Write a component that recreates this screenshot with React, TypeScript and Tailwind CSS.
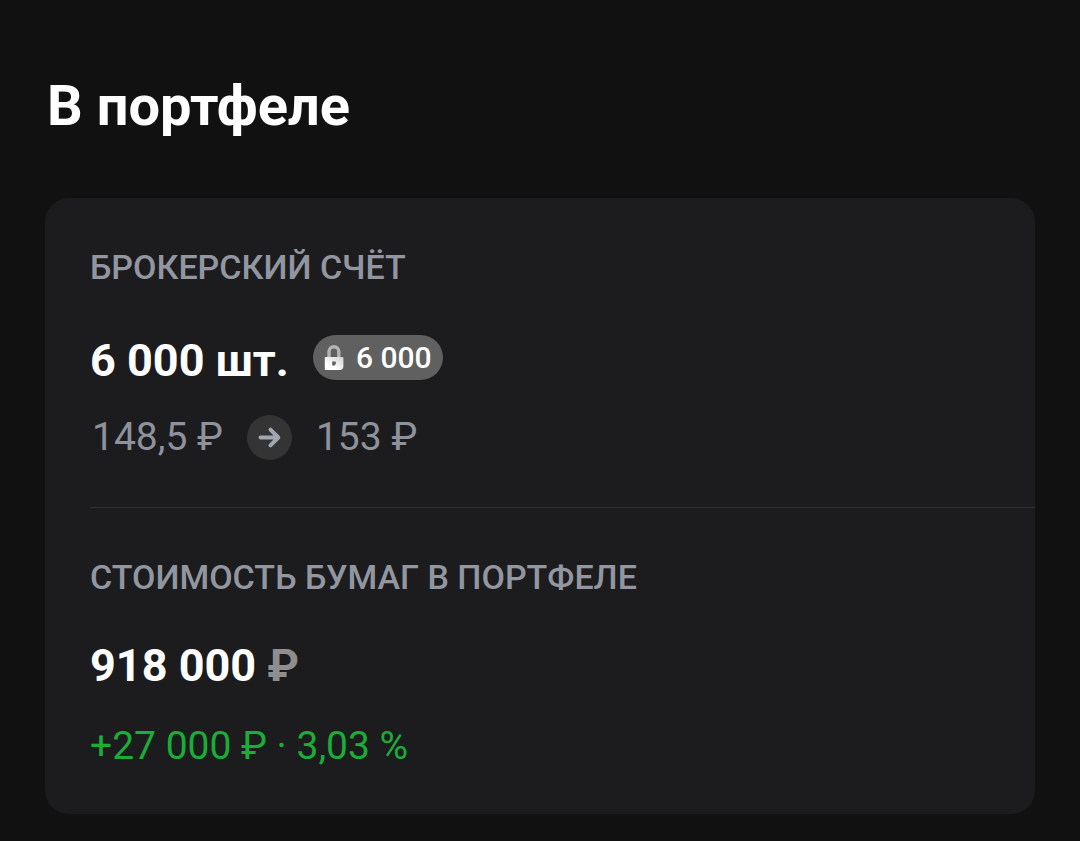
const RUB = "\u20BD"

type Position = {
  quantity: string
  locked: string
  buyPrice: string
  currentPrice: string
  total: string
  profit: string
}

const position: Position = {
  quantity: "6 000 шт.",
  locked: "6 000",
  buyPrice: "148,5",
  currentPrice: "153",
  total: "918 000",
  profit: `+27 000 ${RUB} · 3,03 %`,
}

export default function App() {
  return (
    <main className="min-h-screen bg-[#111111] px-[45px] pt-[72px] pb-[27px] font-['Roboto',sans-serif] text-white">
      <h1 className="pl-[2px] text-[56px] leading-[68px] font-bold">В портфеле</h1>

      <div className="mt-[58px] rounded-[24px] bg-[#1c1c1e] pl-[45px]">
        <section className="border-b border-[#303033] pt-[49px] pb-[46px]">
          <SectionTitle>Брокерский счёт</SectionTitle>
          <div className="mt-[48px] flex items-start gap-6">
            <p className="text-[45px] leading-[52px] font-bold">{position.quantity}</p>
            <LockedBadge value={position.locked} />
          </div>
          <div className="mt-[26px] flex items-center gap-6 pl-[2px] text-[39px] leading-[48px] text-[#8e929c]">
            <span>{position.buyPrice} {RUB}</span>
            <ArrowCircle />
            <span>{position.currentPrice} {RUB}</span>
          </div>
        </section>

        <section className="pt-[49px] pb-[44px]">
          <SectionTitle>Стоимость бумаг в портфеле</SectionTitle>
          <p className="mt-[43px] text-[45px] leading-[52px] font-bold">
            {position.total} <span className="text-[#8e8e8f]">{RUB}</span>
          </p>
          <p className="mt-[30px] text-[39px] leading-[48px] text-[#1aad37]">{position.profit}</p>
        </section>
      </div>
    </main>
  )
}

function SectionTitle({ children }: { children: string }) {
  return <h2 className="text-[34px] leading-[40px] font-medium text-[#9296a0] uppercase">{children}</h2>
}

function LockedBadge({ value }: { value: string }) {
  return (
    <div className="flex h-[45px] items-center gap-3 rounded-full bg-[#606060] px-[11px] text-[30px] font-medium">
      <svg viewBox="0 0 20 26" className="h-[26px] w-[20px]" fill="none" aria-hidden="true">
        <defs>
          <linearGradient id="lock-body" x1="0" y1="1" x2="1" y2="0">
            <stop offset="0.3" stopColor="#ffffff" />
            <stop offset="1" stopColor="#d2d2d2" />
          </linearGradient>
        </defs>
        <path d="M5 13V6.6a4.9 4.9 0 0 1 9.8 0V13" stroke="#b4b4b4" strokeWidth="3.4" />
        <path
          fillRule="evenodd"
          d="M1.6 12h17a.8.8 0 0 1 .8.8V21a4 4 0 0 1-4 4H1.6a.8.8 0 0 1-.8-.8V12.8a.8.8 0 0 1 .8-.8zM8.2 16.5v4h2.2l1.4-1.6v-2.4z"
          fill="url(#lock-body)"
        />
      </svg>
      {value}
    </div>
  )
}

function ArrowCircle() {
  return (
    <svg viewBox="0 0 45 45" className="size-[45px]" fill="none" aria-hidden="true">
      <circle cx="22.5" cy="22.5" r="22.5" fill="#343435" />
      <path
        d="M13.5 22.5h17.5M23.5 14.7l7.8 7.8-7.8 7.8"
        stroke="#a3a6b0"
        strokeWidth="4"
        strokeLinecap="round"
        strokeLinejoin="round"
      />
    </svg>
  )
}
